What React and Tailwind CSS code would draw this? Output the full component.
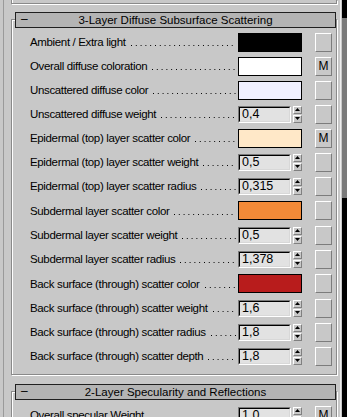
import React from 'react';

const rows = [
  { label: 'Ambient / Extra light', color: '#000000' },
  { label: 'Overall diffuse coloration', color: '#ffffff', map: true },
  { label: 'Unscattered diffuse color', color: '#f0f0ff' },
  { label: 'Unscattered diffuse weight', value: '0,4' },
  { label: 'Epidermal (top) layer scatter color', color: '#ffe8c8', map: true },
  { label: 'Epidermal (top) layer scatter weight', value: '0,5' },
  { label: 'Epidermal (top) layer scatter radius', value: '0,315' },
  { label: 'Subdermal layer scatter color', color: '#f28a38', tall: true },
  { label: 'Subdermal layer scatter weight', value: '0,5' },
  { label: 'Subdermal layer scatter radius', value: '1,378' },
  { label: 'Back surface (through) scatter color', color: '#b81c1c', tall: true },
  { label: 'Back surface (through) scatter weight', value: '1,6' },
  { label: 'Back surface (through) scatter radius', value: '1,8' },
  { label: 'Back surface (through) scatter depth', value: '1,8' },
];

const Spinner = ({ value }) => (
  <div className="flex items-center w-[64px] h-[17px]">
    <div className="w-[54px] h-[17px] border border-t-[#7a7a7a] border-l-[#7a7a7a] border-r-white border-b-white">
      <div className="h-full border border-t-black border-l-black border-r-[#d8d8d8] border-b-[#d8d8d8] bg-[#e2e2e2] pl-[2px] leading-[13px] text-[12.5px] tracking-normal">
        {value}
      </div>
    </div>
    <div className="ml-[2px] w-[9px] h-[17px] flex flex-col">
      <div className="h-[8px] flex items-center justify-center border border-t-white border-l-white border-r-[#808080] border-b-[#808080]">
        <svg width="5" height="3" viewBox="0 0 5 3"><path d="M2.5 0L5 3H0z" fill="#000" /></svg>
      </div>
      <div className="h-[1px]" />
      <div className="h-[8px] flex items-center justify-center border border-t-white border-l-white border-r-[#808080] border-b-[#808080]">
        <svg width="5" height="3" viewBox="0 0 5 3"><path d="M0 0H5L2.5 3z" fill="#000" /></svg>
      </div>
    </div>
  </div>
);

const MapButton = ({ map }) => (
  <div className="w-[17px] h-[19px] flex items-center justify-center border border-t-white border-l-white border-r-[#7c7c7c] border-b-[#7c7c7c] text-[12px] leading-none tracking-normal">
    {map ? 'M' : ''}
  </div>
);

const Row = ({ row }) => (
  <div className={`flex items-center pl-[18px] pr-[4px] ${row.tall ? 'h-[25px]' : 'h-[24px]'}`}>
    <div className="flex-1 flex items-end min-w-0 mr-[2px]">
      <span className="whitespace-nowrap text-[11.5px] tracking-[-0.35px] leading-[14px]">{row.label}</span>
      <span className="flex-1 ml-[5px] mb-[3px] h-[1px] bg-[linear-gradient(to_right,#000_1px,transparent_1px)] bg-[length:4.8px_1px] bg-repeat-x" />
    </div>
    {row.value ? (
      <Spinner value={row.value} />
    ) : (
      <div className="w-[64px] h-[19px] border border-black" style={{ backgroundColor: row.color }} />
    )}
    <div className="ml-[13px]">
      <MapButton map={row.map} />
    </div>
  </div>
);

const Header = ({ title }) => (
  <div className="-mt-[8px] ml-[3px] h-[16px] border border-[#202020] bg-[#b4b4b4] flex items-center relative">
    <span className="absolute left-[5px] top-[0px] leading-[13px]">–</span>
    <span className="flex-1 text-center leading-[14px] text-[11.5px]">{title}</span>
  </div>
);

export default function App() {
  return (
    <div className="w-[347px] h-[417px] overflow-hidden bg-[#c8c8c8] flex font-['Liberation_Sans',Arial,sans-serif] text-[12px] text-black">
      <div className="w-[342px] h-full pl-[3px] pr-[1px]">
        <div className="h-full border-l border-l-[#9a9a9a] border-r border-r-[#eeeeee]">
          <div className="ml-[7px] w-[326px] h-[4px] border-l border-r border-b border-[#8a8a8a] shadow-[inset_1px_0_0_#fff,1px_1px_0_#fff]" />

          <div className="mt-[15px] ml-[7px] w-[326px] border border-[#8a8a8a] shadow-[inset_1px_1px_0_#fff,1px_1px_0_#fff] pb-[6px]">
            <Header title="3-Layer Diffuse Subsurface Scattering" />
            <div className="mt-[2px]">
              {rows.map((row) => (
                <Row key={row.label} row={row} />
              ))}
            </div>
          </div>

          <div className="mt-[16px] ml-[7px] w-[326px] border border-[#8a8a8a] shadow-[inset_1px_1px_0_#fff,1px_1px_0_#fff] pb-[6px]">
            <Header title="2-Layer Specularity and Reflections" />
            <div className="mt-[3px]">
              <Row row={{ label: 'Overall specular Weight', value: '1,0', map: true }} />
            </div>
          </div>
        </div>
      </div>
      <div className="w-[5px] h-full flex flex-col">
        <div className="h-[18px] bg-black" />
        <div className="h-[180px] bg-[#7a7a7a]" />
        <div className="flex-1 bg-black" />
      </div>
    </div>
  );
}
